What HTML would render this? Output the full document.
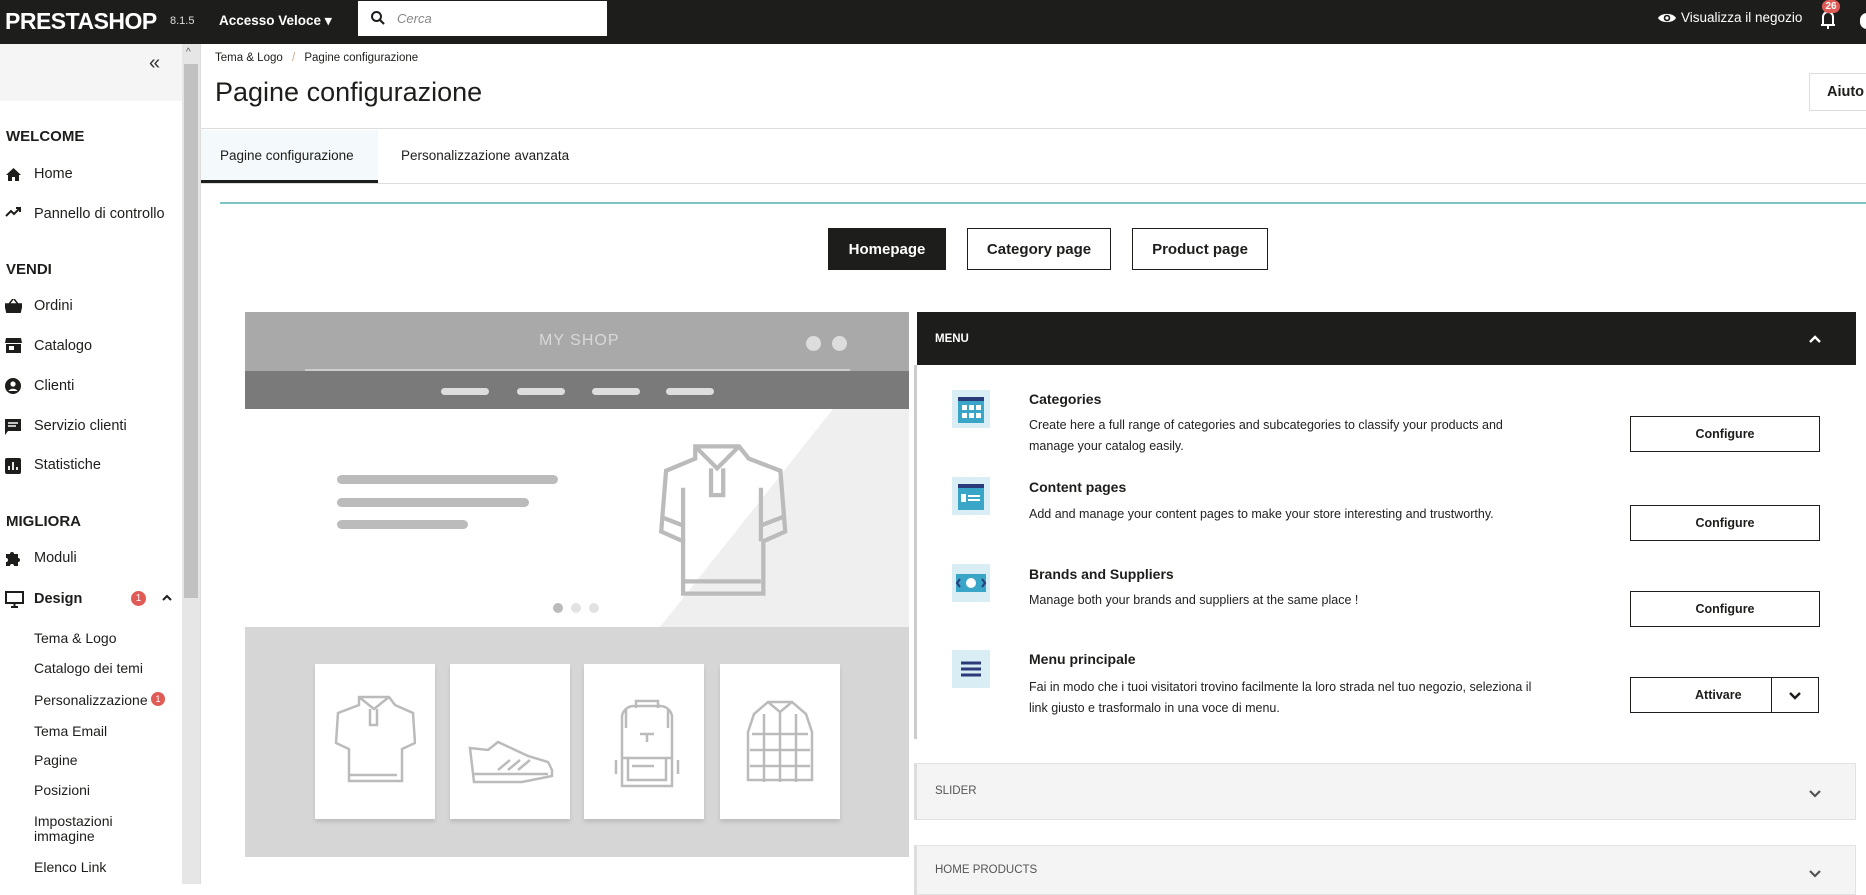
<!DOCTYPE html>
<html><head><meta charset="utf-8"><style>
*{box-sizing:border-box;margin:0;padding:0}
body{width:1866px;height:884px;overflow:hidden;position:relative;background:#fff;font-family:"Liberation Sans",sans-serif;color:#1d1d1b}
.a{position:absolute;white-space:nowrap}
.top{left:0;top:0;width:1866px;height:44px;background:#1d1d1b}
.side{left:0;top:44px;width:182px;height:840px;background:#fff}
.sh{font-weight:bold;font-size:15px}
.si{font-size:14.5px}
.sub{font-size:14px;left:34px}
.btn{border:1px solid #1d1d1b;background:#fff;font-size:15px;font-weight:bold;display:flex;align-items:center;justify-content:center}
.it{font-size:14px;font-weight:bold;left:1029px}
.ds{font-size:12.5px;left:1029px;line-height:21px;color:#222}
.cfg{left:1630px;width:190px;height:36px;border:1px solid #1d1d1b;font-size:12.5px;font-weight:bold;display:flex;align-items:center;justify-content:center}
.ico{left:952px;width:38px;height:38px;background:#d9eef4}
.pill{height:7px;background:#ddd;border-radius:4px;top:388px;width:48px}
.card{background:#fff;width:120px;height:155px;top:664px;box-shadow:0 3px 4px rgba(0,0,0,.12)}
.bar{height:9px;background:#bbb;border-radius:5px}
</style></head><body>
<div class="a top"></div>
<div class="a" style="left:5px;top:8px;color:#fff;font-weight:bold;font-size:23px;letter-spacing:-.5px">PRESTASHOP</div>
<div class="a" style="left:170px;top:15px;color:#ddd;font-size:11px">8.1.5</div>
<div class="a" style="left:219px;top:13px;color:#fff;font-weight:bold;font-size:13.5px">Accesso Veloce ▾</div>
<div class="a" style="left:358px;top:1px;width:249px;height:35px;background:#fff"></div>
<svg class="a" style="left:370px;top:10px" width="16" height="16" viewBox="0 0 16 16"><circle cx="6.5" cy="6.5" r="4.5" stroke="#1d1d1b" stroke-width="2" fill="none"/><path d="M10 10l4 4" stroke="#1d1d1b" stroke-width="2.2"/></svg>
<div class="a" style="left:397px;top:11px;color:#888;font-style:italic;font-size:13px">Cerca</div>
<svg class="a" style="left:1657px;top:11px" width="20" height="14" viewBox="0 0 20 14"><path d="M1 7C4 1.5 16 1.5 19 7C16 12.5 4 12.5 1 7Z" fill="#fff"/><circle cx="10" cy="7" r="3.3" fill="#1d1d1b"/><circle cx="10" cy="7" r="1.6" fill="#fff"/></svg>
<div class="a" style="left:1681px;top:10px;color:#fff;font-size:13.5px">Visualizza il negozio</div>
<svg class="a" style="left:1819px;top:8px" width="18" height="22" viewBox="0 0 18 22"><path d="M4 17V9a5 5 0 0 1 10 0v8M2 17h14M9 18v3" stroke="#fff" stroke-width="2" fill="none"/></svg>
<div class="a" style="left:1822px;top:0px;width:18px;height:13px;background:#e05b56;border-radius:7px;color:#fff;font-size:10px;text-align:center;line-height:13px;font-weight:bold">26</div>
<div class="a" style="left:1860px;top:13px;width:14px;height:16px;background:#fff;border-radius:7px"></div>

<div class="a side"></div>
<div class="a" style="left:0;top:44px;width:182px;height:57px;background:#f5f5f5"></div>
<div class="a" style="left:149px;top:52px;font-size:20px;color:#333">«</div>
<div class="a" style="left:182px;top:44px;width:18px;height:840px;background:#e6e6e6"></div>
<div class="a" style="left:184px;top:64px;width:14px;height:534px;background:#c1c1c1"></div>
<div class="a" style="left:186px;top:47px;font-size:10px;color:#555">^</div>
<div class="a sh" style="left:6px;top:128px">WELCOME</div>
<svg class="a" style="left:5px;top:167px" width="17" height="14" viewBox="0 0 17 14"><path d="M8.5 1L1 8h2v6h4v-4h3v4h4V8h2z" fill="#1d1d1b"/></svg>
<div class="a si" style="left:34px;top:166px">Home</div>
<svg class="a" style="left:5px;top:206px" width="17" height="12" viewBox="0 0 17 12"><path d="M1 10l5-5 3 3 6-6M11 2h4v4" stroke="#1d1d1b" stroke-width="2" fill="none"/></svg>
<div class="a si" style="left:34px;top:206px">Pannello di controllo</div>
<div class="a sh" style="left:6px;top:261px">VENDI</div>
<svg class="a" style="left:5px;top:299px" width="17" height="14" viewBox="0 0 17 14"><path d="M0 5h17l-2 9H2z M4 5l4-5 M13 5l-4-5" fill="#1d1d1b" stroke="#1d1d1b" stroke-width="1.5"/></svg>
<div class="a si" style="left:34px;top:298px">Ordini</div>
<svg class="a" style="left:5px;top:338px" width="17" height="15" viewBox="0 0 17 15"><path d="M1 0h15l1 5H0zM1 6h15v9H1z" fill="#1d1d1b"/><rect x="4" y="8" width="5" height="4" fill="#fff"/></svg>
<div class="a si" style="left:34px;top:338px">Catalogo</div>
<svg class="a" style="left:5px;top:378px" width="16" height="16" viewBox="0 0 16 16"><circle cx="8" cy="8" r="8" fill="#1d1d1b"/><circle cx="8" cy="6" r="2.6" fill="#fff"/><path d="M3.5 13a5 4 0 0 1 9 0" fill="#fff"/></svg>
<div class="a si" style="left:34px;top:378px">Clienti</div>
<svg class="a" style="left:5px;top:419px" width="16" height="16" viewBox="0 0 16 16"><path d="M0 0h16v12H3l-3 4z" fill="#1d1d1b"/><path d="M3 4h10M3 7h8" stroke="#fff" stroke-width="1.4"/></svg>
<div class="a si" style="left:34px;top:418px">Servizio clienti</div>
<svg class="a" style="left:5px;top:458px" width="16" height="16" viewBox="0 0 16 16"><rect width="16" height="16" rx="2" fill="#1d1d1b"/><path d="M4 12V8M8 12V4M12 12V9" stroke="#fff" stroke-width="1.8"/></svg>
<div class="a si" style="left:34px;top:457px">Statistiche</div>
<div class="a sh" style="left:6px;top:513px">MIGLIORA</div>
<svg class="a" style="left:5px;top:550px" width="17" height="17" viewBox="0 0 17 17"><path d="M1 4h4a2 2 0 1 1 4 0h4v4a2 2 0 1 1 0 4v4H9a2 2 0 1 0-4 0H1v-4a2 2 0 1 0 0-4z" fill="#1d1d1b"/></svg>
<div class="a si" style="left:34px;top:550px">Moduli</div>
<svg class="a" style="left:5px;top:591px" width="19" height="17" viewBox="0 0 19 17"><rect x="1" y="1" width="17" height="11" stroke="#1d1d1b" stroke-width="2" fill="none"/><path d="M6 16h7M9.5 12v4" stroke="#1d1d1b" stroke-width="2"/></svg>
<div class="a si" style="left:34px;top:591px;font-weight:bold">Design</div>
<div class="a" style="left:131px;top:591px;width:15px;height:15px;border-radius:8px;background:#e05b56;color:#fff;font-size:10px;text-align:center;line-height:15px">1</div>
<svg class="a" style="left:161px;top:594px" width="12" height="8"><path d="M2 6l4-4 4 4" stroke="#1d1d1b" stroke-width="2" fill="none"/></svg>
<div class="a sub" style="top:630px">Tema &amp; Logo</div>
<div class="a sub" style="top:660px">Catalogo dei temi</div>
<div class="a sub" style="top:692px">Personalizzazione</div>
<div class="a" style="left:151px;top:692px;width:14px;height:14px;border-radius:7px;background:#e05b56;color:#fff;font-size:9px;text-align:center;line-height:14px">1</div>
<div class="a sub" style="top:723px">Tema Email</div>
<div class="a sub" style="top:752px">Pagine</div>
<div class="a sub" style="top:782px">Posizioni</div>
<div class="a sub" style="top:814px;line-height:15px">Impostazioni<br>immagine</div>
<div class="a sub" style="top:859px">Elenco Link</div>

<div class="a" style="left:200px;top:44px;width:1px;height:840px;background:#ddd"></div>
<div class="a" style="left:215px;top:52px;font-size:11.5px">Tema &amp; Logo <span style="color:#c9a88a;margin:0 6px">/</span> Pagine configurazione</div>
<div class="a" style="left:215px;top:77px;font-size:27px">Pagine configurazione</div>
<div class="a" style="left:1809px;top:73px;width:60px;height:38px;border:1px solid #ddd;font-weight:bold;font-size:14.5px;padding:10px 0 0 17px">Aiuto</div>
<div class="a" style="left:200px;top:128px;width:1666px;height:1px;background:#ddd"></div>
<div class="a" style="left:201px;top:130px;width:177px;height:53px;background:#f4f9fb;border-bottom:3px solid #1d1d1b"></div>
<div class="a" style="left:220px;top:148px;font-size:13.5px">Pagine configurazione</div>
<div class="a" style="left:401px;top:148px;font-size:13.5px">Personalizzazione avanzata</div>
<div class="a" style="left:200px;top:183px;width:1666px;height:1px;background:#ddd"></div>
<div class="a" style="left:220px;top:202px;width:1646px;height:2px;background:#7cc5c5"></div>

<div class="a btn" style="left:828px;top:228px;width:118px;height:42px;background:#1d1d1b;color:#fff">Homepage</div>
<div class="a btn" style="left:967px;top:228px;width:144px;height:42px">Category page</div>
<div class="a btn" style="left:1132px;top:228px;width:136px;height:42px">Product page</div>

<!-- preview -->
<div class="a" style="left:245px;top:312px;width:664px;height:545px;background:#fff;overflow:hidden">
 <div class="a" style="left:0;top:0;width:664px;height:59px;background:#a9a9a9"></div>
 <div class="a" style="left:294px;top:20px;color:#d8d8d8;font-size:16px;letter-spacing:1px">MY SHOP</div>
 <div class="a" style="left:561px;top:24px;width:15px;height:15px;border-radius:8px;background:#ddd"></div>
 <div class="a" style="left:587px;top:24px;width:15px;height:15px;border-radius:8px;background:#ddd"></div>
 <div class="a" style="left:60px;top:57px;width:545px;height:2px;background:#ccc"></div>
 <div class="a" style="left:0;top:59px;width:664px;height:38px;background:#7a7a7a"></div>
 <svg class="a" style="left:0;top:97px" width="664" height="218"><polygon points="588,0 664,0 664,218 415,218" fill="#efefef"/></svg>
 <div class="a bar" style="left:92px;top:163px;width:221px"></div>
 <div class="a bar" style="left:92px;top:186px;width:192px"></div>
 <div class="a bar" style="left:92px;top:208px;width:131px"></div>
 <svg class="a" style="left:410px;top:132px" width="134" height="152" viewBox="0 0 110 125" fill="none" stroke="#bbb" stroke-width="3.5"><path d="M33 2h36l8 10 26 10 4 50-18 8v43H23V80L5 72 9 22l24-10z"/><path d="M33 2l18 18 18-18M46 20v22h10V20M23 36v44M87 36v44M23 113h64M5 60l18 7M105 60l-18 7"/></svg>
 <div class="a" style="left:308px;top:291px;width:10px;height:10px;border-radius:5px;background:#bbb"></div>
 <div class="a" style="left:326px;top:291px;width:10px;height:10px;border-radius:5px;background:#e2e2e2"></div>
 <div class="a" style="left:344px;top:291px;width:10px;height:10px;border-radius:5px;background:#e2e2e2"></div>
 <div class="a" style="left:0;top:315px;width:664px;height:230px;background:#d6d6d6"></div>
</div>
<div class="a pill" style="left:441px"></div><div class="a pill" style="left:517px"></div><div class="a pill" style="left:592px"></div><div class="a pill" style="left:666px"></div>
<div class="a card" style="left:315px"></div><div class="a card" style="left:450px"></div><div class="a card" style="left:584px"></div><div class="a card" style="left:720px"></div>
<svg class="a" style="left:334px;top:695px" width="82" height="92" viewBox="0 0 82 92" fill="none" stroke="#bbb" stroke-width="2.5"><path d="M25 2h30l6 8 18 8 2 30-13 6v32H15V54L2 48 4 18l21-8z"/><path d="M25 2l15 12 15-12M36 14v16h7V14M15 80h48"/></svg>
<svg class="a" style="left:468px;top:740px" width="86" height="44" viewBox="0 0 86 44" fill="none" stroke="#bbb" stroke-width="2.5"><path d="M2 8l18 2 10-8 30 14 20 6 4 8v6l-30 6H6z M4 34h76 M30 30l12-10M40 30l12-10M50 30l12-10"/></svg>
<svg class="a" style="left:612px;top:698px" width="70" height="90" viewBox="0 0 70 90" fill="none" stroke="#bbb" stroke-width="2.5"><path d="M24 10V3h22v7 M10 18a12 12 0 0 1 12-10h26a12 12 0 0 1 12 10v70H10z M10 60h50M16 60v22h38V60M20 68h22M35 36v8M28 36h14M4 62v14M66 62v14M14 10v20M56 10v20"/></svg>
<svg class="a" style="left:746px;top:698px" width="68" height="88" viewBox="0 0 68 88" fill="none" stroke="#bbb" stroke-width="2.5"><path d="M22 4h24l14 12 6 18v48H2V34l6-18z M22 4l12 10 12-10 M34 14v70 M6 36h56M4 52h60M4 68h60M18 16v68M50 16v68"/></svg>

<!-- right panel -->
<div class="a" style="left:914px;top:365px;width:3px;height:374px;background:#ccc"></div>
<div class="a" style="left:917px;top:312px;width:939px;height:53px;background:#1d1d1b"></div>
<div class="a" style="left:935px;top:333px;color:#fff;font-size:11.5px;font-weight:bold">MENU</div>
<svg class="a" style="left:1808px;top:334px" width="14" height="10" viewBox="0 0 14 10"><path d="M2 8l5-5 5 5" stroke="#fff" stroke-width="2.4" fill="none"/></svg>

<div class="a ico" style="top:390px"></div>
<svg class="a" style="left:956px;top:397px" width="30" height="26"><rect x="2" y="0" width="26" height="4" fill="#2b3b7a"/><rect x="2" y="4" width="26" height="22" fill="#3aa6c7"/><g fill="#fff"><rect x="6" y="8" width="5" height="5"/><rect x="13" y="8" width="5" height="5"/><rect x="20" y="8" width="5" height="5"/><rect x="6" y="16" width="5" height="5"/><rect x="13" y="16" width="5" height="5"/><rect x="20" y="16" width="5" height="5"/></g></svg>
<div class="a it" style="top:391px">Categories</div>
<div class="a ds" style="top:415px">Create here a full range of categories and subcategories to classify your products and<br>manage your catalog easily.</div>
<div class="a cfg" style="top:416px">Configure</div>

<div class="a ico" style="top:477px"></div>
<svg class="a" style="left:956px;top:484px" width="30" height="26"><rect x="2" y="0" width="26" height="4" fill="#2b3b7a"/><rect x="2" y="4" width="26" height="22" fill="#3aa6c7"/><rect x="5" y="10" width="5" height="8" fill="#fff"/><path d="M12 12h12M12 16h12" stroke="#fff" stroke-width="2"/></svg>
<div class="a it" style="top:479px">Content pages</div>
<div class="a ds" style="top:504px">Add and manage your content pages to make your store interesting and trustworthy.</div>
<div class="a cfg" style="top:505px">Configure</div>

<div class="a ico" style="top:564px"></div>
<svg class="a" style="left:953px;top:573px" width="36" height="20"><rect x="3" y="1" width="30" height="18" fill="#3aa6c7"/><circle cx="18" cy="10" r="5" fill="#fff"/><path d="M7 6l-3 4 3 4M29 6l3 4-3 4" stroke="#2b3b7a" stroke-width="2" fill="none"/></svg>
<div class="a it" style="top:566px">Brands and Suppliers</div>
<div class="a ds" style="top:590px">Manage both your brands and suppliers at the same place !</div>
<div class="a cfg" style="top:591px">Configure</div>

<div class="a ico" style="top:650px"></div>
<svg class="a" style="left:961px;top:660px" width="20" height="18"><path d="M0 3h20M0 9h20M0 15h20" stroke="#2b3b7a" stroke-width="3"/></svg>
<div class="a it" style="top:651px">Menu principale</div>
<div class="a ds" style="top:677px">Fai in modo che i tuoi visitatori trovino facilmente la loro strada nel tuo negozio, seleziona il<br>link giusto e trasformalo in una voce di menu.</div>
<div class="a cfg" style="top:677px;width:189px;justify-content:flex-start;padding-left:64px">Attivare</div>
<div class="a" style="left:1771px;top:678px;width:1px;height:34px;background:#1d1d1b"></div>
<svg class="a" style="left:1788px;top:691px" width="14" height="10"><path d="M2 2l5 5 5-5" stroke="#1d1d1b" stroke-width="2.4" fill="none"/></svg>

<div class="a" style="left:914px;top:763px;width:942px;height:57px;background:#f4f4f4;border:1px solid #e2e2e2;border-left:3px solid #ddd"></div>
<div class="a" style="left:935px;top:785px;font-size:11.5px;color:#555">SLIDER</div>
<svg class="a" style="left:1808px;top:789px" width="14" height="10"><path d="M2 2l5 5 5-5" stroke="#555" stroke-width="2.2" fill="none"/></svg>
<div class="a" style="left:914px;top:845px;width:942px;height:50px;background:#f4f4f4;border:1px solid #e2e2e2;border-left:3px solid #ddd"></div>
<div class="a" style="left:935px;top:864px;font-size:11.5px;color:#555">HOME PRODUCTS</div>
<svg class="a" style="left:1808px;top:869px" width="14" height="10"><path d="M2 2l5 5 5-5" stroke="#555" stroke-width="2.2" fill="none"/></svg>
</body></html>
